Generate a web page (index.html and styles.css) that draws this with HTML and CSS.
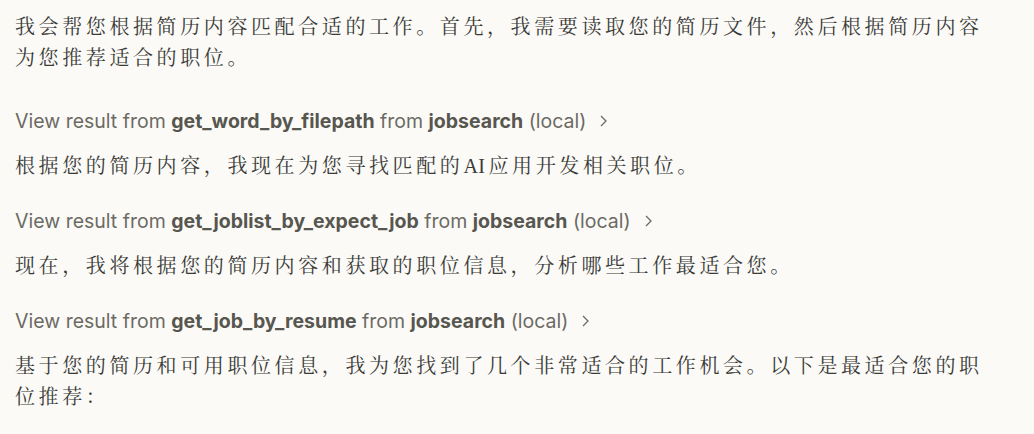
FILE: index.html
```html
<!DOCTYPE html>
<html lang="zh-CN">
<head>
<meta charset="utf-8">
<link rel="stylesheet" href="styles.css">
</head>
<body>
<main class="thread">
  <p class="para">我会帮您根据简历内容匹配合适的工作。首先，我需要读取您的简历文件，然后根据简历内容为您推荐适合的职位。</p>
  <div class="tool tool-first">View result from <b>get_word_by_filepath</b> from <b>jobsearch</b> (local)<svg class="chev" viewBox="0 0 10 14" width="10" height="14"><path d="M2 2 L7 7 L2 12" fill="none" stroke="currentColor" stroke-width="1.3"/></svg></div>
  <p class="para">根据您的简历内容，我现在为您寻找匹配的<span class="latin">AI</span>应用开发相关职位。</p>
  <div class="tool">View result from <b>get_joblist_by_expect_job</b> from <b>jobsearch</b> (local)<svg class="chev" viewBox="0 0 10 14" width="10" height="14"><path d="M2 2 L7 7 L2 12" fill="none" stroke="currentColor" stroke-width="1.3"/></svg></div>
  <p class="para">现在，我将根据您的简历内容和获取的职位信息，分析哪些工作最适合您。</p>
  <div class="tool">View result from <b>get_job_by_resume</b> from <b>jobsearch</b> (local)<svg class="chev" viewBox="0 0 10 14" width="10" height="14"><path d="M2 2 L7 7 L2 12" fill="none" stroke="currentColor" stroke-width="1.3"/></svg></div>
  <p class="para">基于您的简历和可用职位信息，我为您找到了几个非常适合的工作机会。以下是最适合您的职位推荐：</p>
</main>
</body>
</html>
```

FILE: styles.css
```css
html, body {
  margin: 0;
  padding: 0;
  background: #fbfaf7;
}
.thread {
  display: flex;
  flex-direction: column;
  width: 990px;
  padding: 12px 0 0 15px;
}
.para {
  margin: 0;
  font-family: "Liberation Serif", "Noto Serif CJK SC", "Noto Sans CJK SC", serif;
  font-size: 20px;
  line-height: 31px;
  letter-spacing: 3.6px;
  color: #3a3a37;
}
.latin {
  letter-spacing: 0.5px;
  margin-right: 3px;
}
.tool {
  display: flex;
  align-items: center;
  height: 24px;
  margin: 27px 0 18px;
  font-family: "Inter", "Noto Sans", sans-serif;
  font-size: 19.5px;
  color: #6b6a64;
  white-space: pre;
}
.tool-first {
  margin-top: 35px;
}
.tool b {
  font-weight: 700;
  color: #57564f;
}
.chev {
  margin-left: 13px;
  color: #6b6a64;
}
```
